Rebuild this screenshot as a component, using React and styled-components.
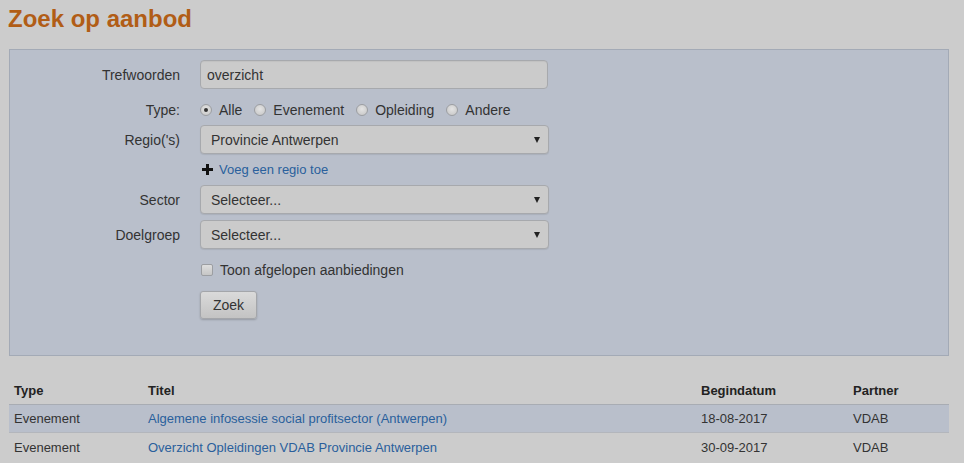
import React from 'react';
import styled, { createGlobalStyle } from 'styled-components';

const colors = {
    page: '#cccccc',
    panel: '#b9bfcb',
    panelBorder: '#a3aab6',
    text: '#333333',
    heading: '#b15d16',
    link: '#2a5f9c',
    field: '#cbcbcb',
    fieldBorder: '#a7a9ad',
};

const GlobalStyle = createGlobalStyle`
    html, body {
        margin: 0;
        padding: 0;
        background: ${colors.page};
    }
    body {
        font-family: "Liberation Sans", Arial, sans-serif;
        font-size: 14px;
        color: ${colors.text};
    }
`;

const Page = styled.div`
    width: 940px;
    padding-left: 9px;
`;

const Heading = styled.h1`
    margin: 0 0 0 -1px;
    padding: 5px 0 0 0;
    height: 49px;
    box-sizing: border-box;
    font-size: 24px;
    line-height: 28px;
    font-weight: bold;
    color: ${colors.heading};
`;

const Panel = styled.div`
    box-sizing: border-box;
    height: 307px;
    background: ${colors.panel};
    border: 1px solid ${colors.panelBorder};
    padding: 10px 0 0 0;
    display: grid;
    grid-template-columns: 170px 349px;
    column-gap: 20px;
    row-gap: 6px;
    grid-template-rows: 29px 24px 29px 19px 29px 29px 30px 28px;
    align-content: start;
`;

const Label = styled.label`
    text-align: right;
    align-self: center;
    padding-top: ${p => p.$offset || 0}px;
`;

const TextInput = styled.div`
    box-sizing: border-box;
    width: 348px;
    height: 29px;
    border: 1px solid ${colors.fieldBorder};
    border-radius: 4px;
    background: ${colors.field};
    padding: 0 0 0 6px;
    display: flex;
    align-items: center;
    box-shadow: inset 0 1px 1px rgba(0,0,0,0.05);
`;

const Select = styled.div`
    box-sizing: border-box;
    width: 349px;
    height: 29px;
    border: 1px solid ${colors.fieldBorder};
    border-radius: 4px;
    background: ${colors.field};
    padding: 0 8px 0 10px;
    display: flex;
    align-items: center;
    justify-content: space-between;
    box-shadow: 0 1px 1px rgba(0,0,0,0.08);
`;

const Caret = styled.span`
    width: 0;
    height: 0;
    border-left: 3px solid transparent;
    border-right: 3px solid transparent;
    border-top: 6px solid #222;
`;

const RadioGroup = styled.div`
    display: flex;
    align-items: center;
    padding-top: 6px;
    gap: 12px;
`;

const RadioOption = styled.span`
    display: flex;
    align-items: center;
    gap: 7px;
`;

const Radio = styled.span`
    box-sizing: border-box;
    width: 12px;
    height: 12px;
    border-radius: 50%;
    border: 1px solid #9c9ea2;
    background: radial-gradient(circle at 50% 40%, #e4e4e4, #c4c4c4);
    display: flex;
    align-items: center;
    justify-content: center;
    &::after {
        content: '';
        width: 4px;
        height: 4px;
        border-radius: 50%;
        background: ${p => (p.$checked ? '#333' : 'transparent')};
    }
`;

const LinkRow = styled.div`
    display: flex;
    align-items: center;
    gap: 6px;
    padding-left: 2px;
    font-size: 13px;
`;

const Link = styled.a`
    color: ${colors.link};
    text-decoration: none;
    cursor: pointer;
`;

const CheckRow = styled.div`
    display: flex;
    align-items: center;
    gap: 7px;
    padding-left: 1px;
`;

const Checkbox = styled.span`
    box-sizing: border-box;
    width: 12px;
    height: 12px;
    border-radius: 2px;
    border: 1px solid #9c9ea2;
    background: linear-gradient(#dedede, #c6c6c6);
`;

const Button = styled.button`
    box-sizing: border-box;
    width: 57px;
    height: 28px;
    font-family: inherit;
    font-size: 14px;
    color: ${colors.text};
    border: 1px solid #a4a6aa;
    border-radius: 3px;
    background: linear-gradient(#dadada, #c3c3c3);
    box-shadow: 0 1px 2px rgba(0,0,0,0.2);
    padding: 0;
    justify-self: start;
`;

const Table = styled.div`
    margin-top: 20px;
    font-size: 13px;
`;

const TableRow = styled.div`
    display: grid;
    grid-template-columns: 134px 553px 152px 100px;
    height: ${p => (p.$head ? 29 : 28)}px;
    align-items: center;
    background: ${p => (p.$shaded ? colors.panel : 'transparent')};
    border-bottom: ${p => (p.$head ? '1px solid #a8acb3' : p.$last ? 'none' : '1px solid #b3b6bc')};
    box-sizing: border-box;
    font-weight: ${p => (p.$head ? 'bold' : 'normal')};
    color: ${p => (p.$head ? '#222' : colors.text)};
`;

const Cell = styled.div`
    padding-left: 5px;
`;

const PlusIcon = () => (
    <svg width="11" height="11" viewBox="0 0 11 11">
        <path d="M4 0h3v4h4v3H7v4H4V7H0V4h4z" fill="#111" />
    </svg>
);

const rows = [
    { type: 'Evenement', title: 'Algemene infosessie social profitsector (Antwerpen)', date: '18-08-2017', partner: 'VDAB' },
    { type: 'Evenement', title: 'Overzicht Opleidingen VDAB Provincie Antwerpen', date: '30-09-2017', partner: 'VDAB' },
];

export default function App() {
    return (
        <Page>
            <GlobalStyle />
            <Heading>Zoek op aanbod</Heading>
            <Panel>
                <Label>Trefwoorden</Label>
                <TextInput>overzicht</TextInput>

                <Label $offset={6}>Type:</Label>
                <RadioGroup>
                    <RadioOption><Radio $checked />Alle</RadioOption>
                    <RadioOption><Radio />Evenement</RadioOption>
                    <RadioOption><Radio />Opleiding</RadioOption>
                    <RadioOption><Radio />Andere</RadioOption>
                </RadioGroup>

                <Label>Regio('s)</Label>
                <Select>Provincie Antwerpen<Caret /></Select>

                <span />
                <LinkRow><PlusIcon /><Link>Voeg een regio toe</Link></LinkRow>

                <Label>Sector</Label>
                <Select>Selecteer...<Caret /></Select>

                <Label>Doelgroep</Label>
                <Select>Selecteer...<Caret /></Select>

                <span />
                <CheckRow><Checkbox />Toon afgelopen aanbiedingen</CheckRow>

                <span />
                <Button>Zoek</Button>
            </Panel>
            <Table>
                <TableRow $head>
                    <Cell>Type</Cell>
                    <Cell>Titel</Cell>
                    <Cell>Begindatum</Cell>
                    <Cell>Partner</Cell>
                </TableRow>
                {rows.map((r, i) => (
                    <TableRow key={i} $shaded={i % 2 === 0} $last={i === rows.length - 1}>
                        <Cell>{r.type}</Cell>
                        <Cell><Link>{r.title}</Link></Cell>
                        <Cell>{r.date}</Cell>
                        <Cell>{r.partner}</Cell>
                    </TableRow>
                ))}
            </Table>
        </Page>
    );
}
